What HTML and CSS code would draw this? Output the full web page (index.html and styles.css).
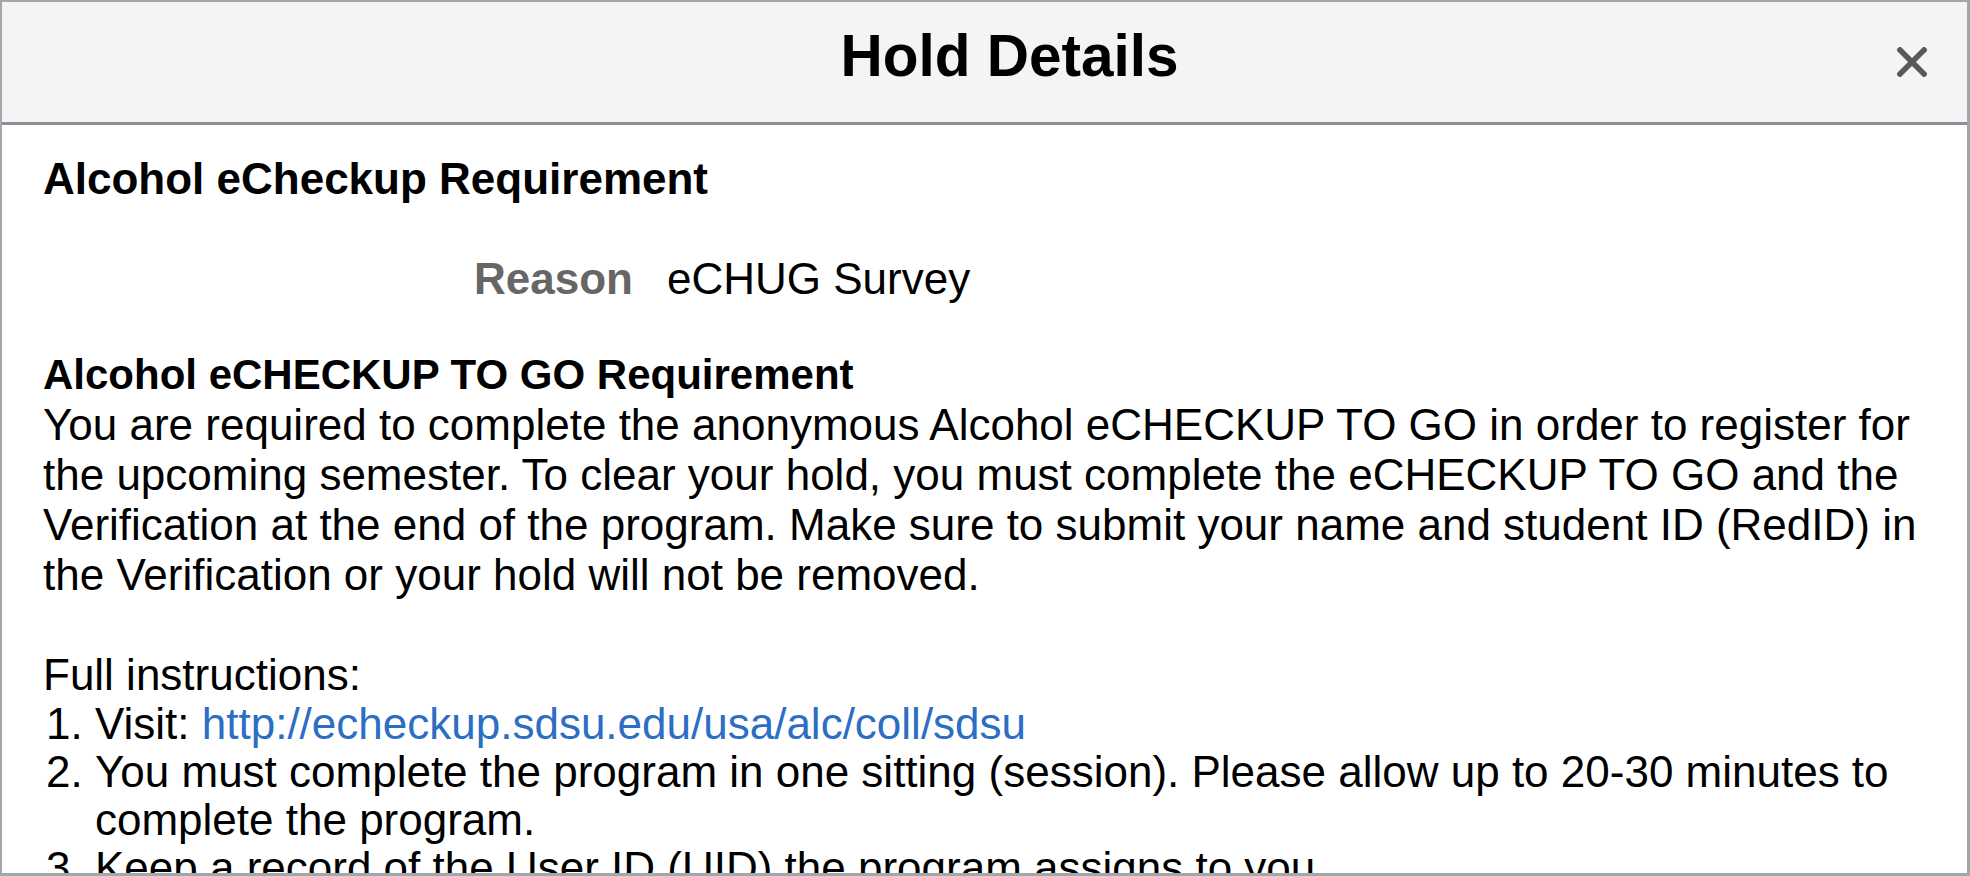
FILE: index.html
```html
<!DOCTYPE html>
<html lang="en">
<head>
<meta charset="utf-8">
<title>Hold Details</title>
<link rel="stylesheet" href="styles.css">
</head>
<body>
<div class="modal">
  <header class="modal-header">
    <h1 class="modal-title">Hold Details</h1>
    <button class="close-btn" type="button" aria-label="Close">
      <svg width="30" height="30" viewBox="0 0 30 30" aria-hidden="true">
        <path d="M3 3 L27 27 M27 3 L3 27" stroke="#595959" stroke-width="5.5" stroke-linecap="square" fill="none"/>
      </svg>
    </button>
  </header>
  <div class="modal-body">
    <h2 class="hold-name">Alcohol eCheckup Requirement</h2>
    <div class="field">
      <span class="field-label">Reason</span>
      <span class="field-value">eCHUG Survey</span>
    </div>
    <div class="desc">
      <strong class="desc-title">Alcohol eCHECKUP TO GO Requirement</strong><br>
      You are required to complete the anonymous Alcohol eCHECKUP TO GO in order to register for the upcoming semester. To clear your hold, you must complete the eCHECKUP TO GO and the Verification at the end of the program. Make sure to submit your name and student ID (RedID) in the Verification or your hold will not be removed.<br>
      <br>
      Full instructions:
      <ol class="steps">
        <li>Visit: <a href="#">http://echeckup.sdsu.edu/usa/alc/coll/sdsu</a></li>
        <li>You must complete the program in one sitting (session). Please allow up to 20-30 minutes to complete the program.</li>
        <li>Keep a record of the User ID (UID) the program assigns to you.</li>
        <li>At the end of the program, complete the Verification with your name and RedID.</li>
      </ol>
    </div>
  </div>
</div>
</body>
</html>
```

FILE: styles.css
```css
html, body {
  margin: 0;
  padding: 0;
  background: #ffffff;
}

body {
  font-family: "Liberation Sans", Arial, Helvetica, sans-serif;
  color: #000000;
  overflow: hidden;
}

.modal {
  box-sizing: border-box;
  width: 1970px;
  height: 876px;
  border: 2px solid #a2a7ac;
  border-right-width: 3px;
  border-bottom-width: 3px;
  display: flex;
  flex-direction: column;
  overflow: hidden;
  background: #ffffff;
}

.modal-header {
  flex: 0 0 auto;
  height: 123px;
  box-sizing: border-box;
  background: #f4f4f4;
  border-bottom: 3px solid #8a9097;
  display: flex;
  align-items: flex-start;
  padding-left: 150px;
}

.modal-title {
  flex: 1 1 auto;
  margin: 21px 0 0 0;
  font-size: 58.5px;
  line-height: 66px;
  font-weight: bold;
  text-align: center;
}

.close-btn {
  flex: 0 0 auto;
  align-self: center;
  width: 90px;
  height: 60px;
  margin: 0 10px 0 0;
  padding: 0;
  border: 0;
  background: transparent;
  display: flex;
  align-items: center;
  justify-content: center;
  cursor: pointer;
}

.modal-body {
  flex: 1 1 auto;
  padding: 29px 30px 0 41px;
  font-size: 44px;
  line-height: 50px;
}

.hold-name {
  margin: 0;
  font-size: 44px;
  line-height: 50px;
  font-weight: bold;
}

.field {
  display: flex;
  gap: 34px;
  margin-top: 50px;
}

.field-label {
  width: 590px;
  text-align: right;
  font-weight: bold;
  color: #666666;
}

.field-value {
  color: #000000;
}

.desc {
  margin-top: 45px;
}

.desc-title {
  font-size: 42px;
}

.steps {
  margin: 0;
  padding-left: 52px;
  line-height: 48px;
}

.steps a {
  color: #2c6ec3;
  text-decoration: none;
}
```
